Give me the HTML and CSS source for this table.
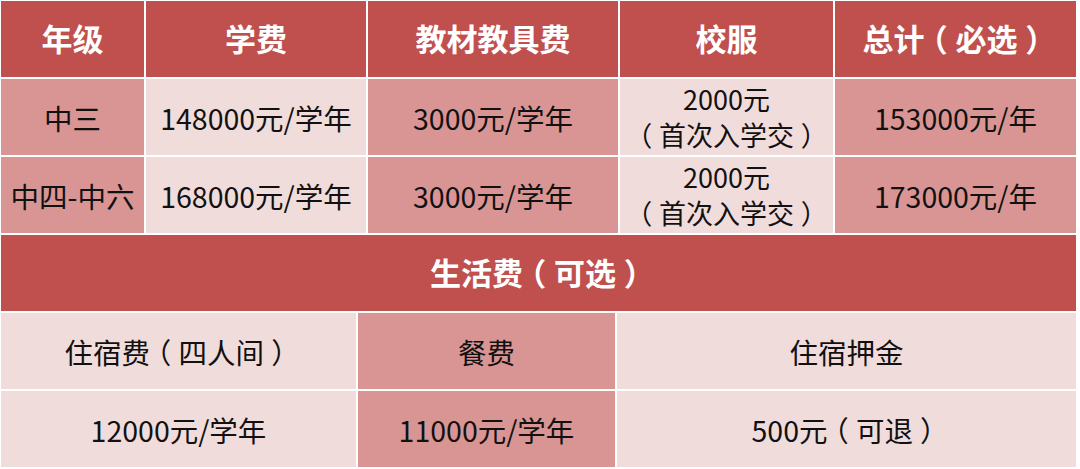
FILE: index.html
```html
<!DOCTYPE html>
<html lang="zh">
<head>
<meta charset="utf-8">
<link rel="stylesheet" href="styles.css">
</head>
<body>
<div class="sheet">
  <div class="grid top">
    <div class="cell head">年级</div>
    <div class="cell head">学费</div>
    <div class="cell head">教材教具费</div>
    <div class="cell head">校服</div>
    <div class="cell head">总计<span class="p">（</span>必选<span class="p">）</span></div>

    <div class="cell dark">中三</div>
    <div class="cell light">148000元/学年</div>
    <div class="cell dark">3000元/学年</div>
    <div class="cell light two"><span>2000元</span><span><span class="p">（</span>首次入学交<span class="p">）</span></span></div>
    <div class="cell dark">153000元/年</div>

    <div class="cell dark">中四-中六</div>
    <div class="cell light">168000元/学年</div>
    <div class="cell dark">3000元/学年</div>
    <div class="cell light two"><span>2000元</span><span><span class="p">（</span>首次入学交<span class="p">）</span></span></div>
    <div class="cell dark">173000元/年</div>
  </div>
  <div class="cell head section">生活费<span class="p">（</span>可选<span class="p">）</span></div>
  <div class="grid bottom">
    <div class="cell light">住宿费<span class="p">（</span>四人间<span class="p">）</span></div>
    <div class="cell dark">餐费</div>
    <div class="cell light">住宿押金</div>
    <div class="cell light">12000元/学年</div>
    <div class="cell dark">11000元/学年</div>
    <div class="cell light">500元<span class="p">（</span>可退<span class="p">）</span></div>
  </div>
</div>
</body>
</html>
```

FILE: styles.css
```css
html, body {
  margin: 0;
  padding: 0;
  background: #ffffff;
}
body {
  font-family: "Noto Sans CJK SC", "Noto Sans", sans-serif;
  color: #111111;
}
.sheet {
  margin: 1px 0 0 1px;
  width: 1075px;
  display: flex;
  flex-direction: column;
  gap: 2px;
}
.grid {
  display: grid;
  gap: 2px;
  grid-auto-rows: 76px;
}
.top {
  grid-template-columns: 143px 220px 250px 213px 241px;
}
.bottom {
  grid-template-columns: 355px 257px 459px;
}
.cell {
  display: flex;
  align-items: center;
  justify-content: center;
  text-align: center;
  font-size: 28.5px;
  white-space: nowrap;
}
.head {
  background: #c0504d;
  color: #ffffff;
  font-size: 31px;
  font-weight: 700;
  padding-bottom: 3px;
  box-sizing: border-box;
}
.section {
  height: 76px;
}
.dark {
  background: #d99594;
}
.light {
  background: #f1dcdc;
}
.two {
  flex-direction: column;
  font-size: 27px;
  line-height: 36px;
}
.p {
  font-feature-settings: "halt";
  padding: 0 0.25em;
}
```
